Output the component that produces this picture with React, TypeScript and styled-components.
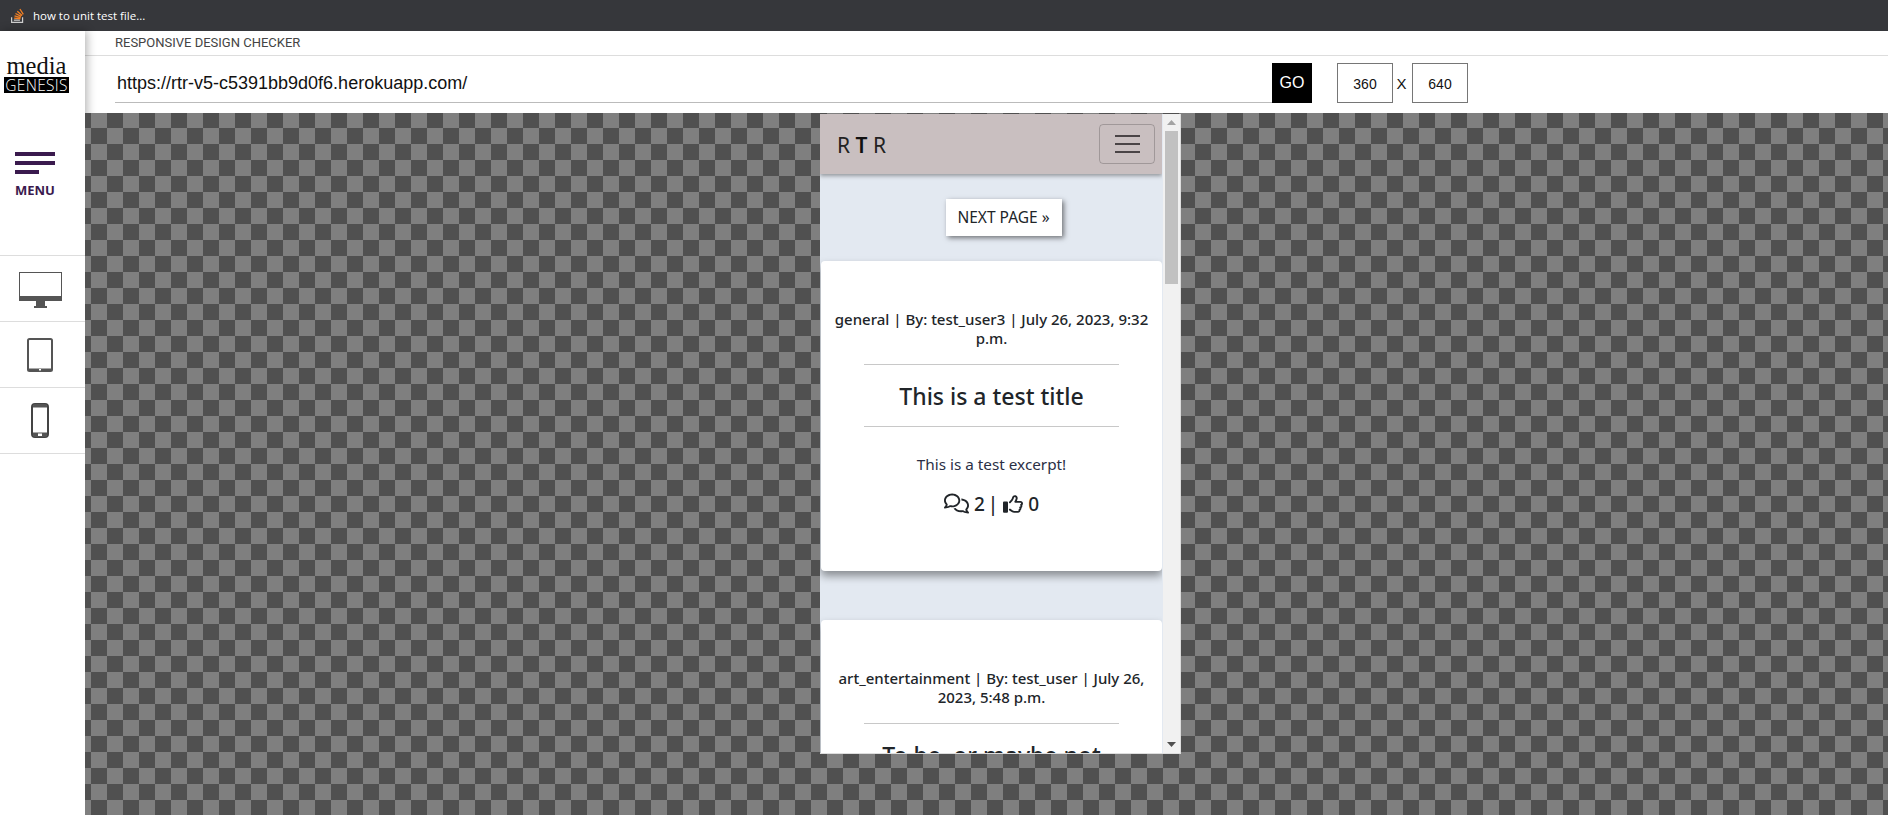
import React from "react";
import styled, { createGlobalStyle } from "styled-components";
import { FaRegComments, FaRegThumbsUp } from "react-icons/fa6";

const GlobalStyle = createGlobalStyle`
  html, body {
    margin: 0;
    height: 100%;
    overflow: hidden;
    background: #fff;
    font-family: "Liberation Sans", Arial, sans-serif;
  }
  * { box-sizing: border-box; }
`;

const Page = styled.div`
  display: grid;
  grid-template-columns: 85px 1fr;
  grid-template-rows: 31px 82px 1fr;
  height: 815px;
  width: 1888px;
`;

const TabBar = styled.div`
  grid-column: 1 / -1;
  display: flex;
  align-items: center;
  gap: 9px;
  padding: 0 0 1px 11px;
  background: #36373b;
  color: #fff;
  font: 400 11.5px "Open Sans", sans-serif;
`;

const Sidebar = styled.aside`
  grid-row: 2 / 4;
  position: relative;
  z-index: 2;
  background: #fff;
  box-shadow: 2px 0 9px rgba(0, 0, 0, 0.3);
  padding-top: 26px;
`;

const Logo = styled.div`
  display: flex;
  flex-direction: column;
  align-items: center;
  gap: 3px;
  width: 65px;
  margin-left: 4px;
`;

const LogoTop = styled.span`
  font: 400 24.5px/17px "Liberation Serif", serif;
  color: #111;
  height: 17px;
`;

const LogoBottom = styled.span`
  width: 100%;
  height: 16px;
  background: #000;
  color: #fff;
  font: 300 15.5px/16px "Open Sans", sans-serif;
  letter-spacing: 0.3px;
  text-align: center;
`;

const MenuBlock = styled.div`
  display: flex;
  flex-direction: column;
  padding: 59px 0 0 15px;
  height: 162px;
`;

const Bar = styled.span<{ $w: number }>`
  display: block;
  width: ${({ $w }) => $w}px;
  height: 3.5px;
  margin-bottom: 5.5px;
  background: #3a1a4e;
`;

const MenuLabel = styled.span`
  margin-top: 3px;
  font: 700 13px/16px "Open Sans", sans-serif;
  color: #3a1a4e;
`;

const DeviceList = styled.div`
  border-top: 1px solid #ddd;
`;

const DeviceItem = styled.div`
  display: flex;
  align-items: center;
  justify-content: center;
  height: 66px;
  padding-right: 5px;
  border-bottom: 1px solid #ddd;
`;

const Header = styled.header`
  position: relative;
  z-index: 1;
  background: #fff;
`;

const TitleRow = styled.div`
  height: 25px;
  padding: 4px 0 0 30px;
  border-bottom: 1px solid #ddd;
  font: 400 13px/16px Roboto, sans-serif;
  color: #444;
`;

const UrlRow = styled.div`
  display: flex;
  align-items: flex-start;
  padding: 7px 0 0 30px;
`;

const UrlInput = styled.input`
  width: 1157px;
  height: 40px;
  padding: 2px 2px 0;
  border: 0;
  border-bottom: 1px solid #bbb;
  outline: none;
  font: 400 18px "Liberation Sans", Arial, sans-serif;
  color: #111;
`;

const GoButton = styled.button`
  width: 40px;
  height: 40px;
  padding: 0;
  border: 0;
  background: #000;
  color: #fff;
  font: 400 16px "Liberation Sans", Arial, sans-serif;
`;

const SizeGroup = styled.div`
  display: flex;
  align-items: center;
  margin-left: 25px;
`;

const SizeInput = styled.input`
  width: 56px;
  height: 40px;
  padding: 2px 0 0;
  border: 1px solid #767676;
  outline: none;
  text-align: center;
  font: 400 14px "Liberation Sans", Arial, sans-serif;
  color: #111;
`;

const SizeX = styled.span`
  width: 19px;
  padding-right: 2px;
  text-align: center;
  font-size: 15px;
  color: #111;
`;

const Canvas = styled.main`
  position: relative;
  z-index: 3;
  overflow: hidden;
  padding: 1px 0 0 735px;
  background: repeating-conic-gradient(#505050 0 25%, #7f7f7f 0 50%) 6px -1px / 32px 32px;
`;

const Frame = styled.div`
  display: flex;
  width: 361px;
  height: 640px;
  overflow: hidden;
  background: #e3e9f1;
  border-right: 1px solid #ddd;
  border-bottom: 1px solid #ddd;
`;

const Viewport = styled.div`
  width: 343px;
  height: 100%;
  overflow: hidden;
  font-family: "Noto Sans", "Open Sans", sans-serif;
  color: #212529;
`;

const Navbar = styled.nav`
  position: relative;
  display: flex;
  align-items: center;
  justify-content: space-between;
  height: 60px;
  padding: 0 7px 0 17px;
  background: #c9bfc0;
  box-shadow: 0 2px 4px rgba(0, 0, 0, 0.35);
`;

const Brand = styled.span`
  padding-top: 2px;
  font-size: 21px;
  color: #222;
`;

const BrandMark = styled.b`
  font-weight: 600;
  color: #111;
`;

const Toggler = styled.button`
  display: flex;
  flex-direction: column;
  justify-content: center;
  gap: 6px;
  align-items: center;
  width: 56px;
  height: 40px;
  padding: 0;
  background: transparent;
  border: 1px solid rgba(0, 0, 0, 0.2);
  border-radius: 4px;
`;

const TogglerLine = styled.span`
  display: block;
  width: 25px;
  height: 2px;
  background: #4a4446;
`;

const Pager = styled.div`
  display: flex;
  justify-content: center;
  padding: 25px 0 0 25px;
  margin-bottom: 25px;
`;

const NextButton = styled.a`
  display: block;
  width: 116px;
  height: 37px;
  background: #fff;
  text-align: center;
  font-size: 15.5px;
  line-height: 37px;
  box-shadow: 2px 2px 5px rgba(0, 0, 0, 0.5);
`;

const Card = styled.article`
  width: 341px;
  margin: 0 0 49px 1px;
  padding: 49px 0 55px;
  background: #fff;
  border-radius: 4px;
  box-shadow: 0 5px 9px rgba(0, 0, 0, 0.4);
  text-align: center;
`;

const Meta = styled.div`
  padding: 0 8px;
  font-size: 15px;
  font-weight: 500;
  line-height: 19px;
`;

const Rule = styled.hr`
  width: 255px;
  margin: 16px auto;
  border: 0;
  border-top: 1px solid #c8c8c8;
`;

const Title = styled.h2`
  margin: -1px 0;
  font-size: 23px;
  font-weight: 500;
  line-height: 33px;
  padding-top: 0;
  height: 31px;
`;

const Excerpt = styled.p`
  margin: 25px 0 15px;
  font-size: 15.3px;
  font-weight: 400;
  line-height: 24px;
  color: #2b2f45;
`;

const Stats = styled.div`
  display: flex;
  justify-content: center;
  align-items: center;
  gap: 5px;
  font-size: 19px;
  font-weight: 500;
  line-height: 24px;
  word-spacing: -2px;
`;

const Scrollbar = styled.div`
  display: flex;
  flex-direction: column;
  width: 17px;
  margin-left: 1px;
  background: #f1f1f1;
`;

const ArrowCell = styled.div`
  display: flex;
  align-items: center;
  justify-content: center;
  height: 17px;
`;

const Thumb = styled.div`
  height: 153px;
  margin: 0 2px;
  background: #c1c1c1;
`;

const Spacer = styled.div`
  flex: 1;
`;

const StackIcon = () => (
  <svg width="13" height="15" viewBox="0 0 32 37">
    <path d="M1.5 23v12.5h27V23" fill="none" stroke="#cfcfcf" strokeWidth="3" />
    <path d="M7 30h15" stroke="#cfcfcf" strokeWidth="3" />
    <path
      d="M7.7 25l15.5 1.5M8.6 19.5l15.2 4.2M11 13.5l14 7.3M15.5 8l11.8 10.3M22 2.5l8.3 13"
      fill="none"
      stroke="#f48024"
      strokeWidth="3.2"
    />
  </svg>
);

const MonitorIcon = () => (
  <svg width="43" height="38" viewBox="0 -2 43 38">
    <rect x="0.5" y="0.5" width="42" height="28" fill="#fff" stroke="#555" />
    <rect x="0.5" y="24" width="42" height="5" fill="#555" />
    <path d="M17 29h9v5h-9zM15 34h13v2H15z" fill="#555" />
  </svg>
);

const TabletIcon = () => (
  <svg width="26" height="34" viewBox="0 0 26 34">
    <rect x="1" y="1" width="24" height="32" rx="1.5" fill="#fff" stroke="#555" strokeWidth="2" />
    <rect x="2" y="30.5" width="22" height="2" fill="#555" />
    <rect x="12" y="31" width="2" height="1.5" fill="#fff" />
  </svg>
);

const PhoneIcon = () => (
  <svg width="18" height="35" viewBox="0 0 18 35">
    <rect x="1" y="1" width="16" height="33" rx="3" fill="#fff" stroke="#444" strokeWidth="2" />
    <path d="M2 4.5V3a2 2 0 0 1 2-2h10a2 2 0 0 1 2 2v1.5zM2 29.5h14V32a2 2 0 0 1-2 2H4a2 2 0 0 1-2-2z" fill="#555" />
    <rect x="7" y="30.5" width="4" height="2.5" fill="#fff" />
  </svg>
);

const ArrowIcon = ({ down }: { down?: boolean }) => (
  <svg width="9" height="5" viewBox="0 0 9 5">
    <path d={down ? "M0 0h9L4.5 5z" : "M0 5h9L4.5 0z"} fill={down ? "#505050" : "#a3a3a3"} />
  </svg>
);

const App: React.FC = () => {
  return (
    <Page>
      <GlobalStyle />
      <TabBar>
        <StackIcon />
        <span>how to unit test file...</span>
      </TabBar>
      <Sidebar>
        <Logo>
          <LogoTop>media</LogoTop>
          <LogoBottom>GENESIS</LogoBottom>
        </Logo>
        <MenuBlock>
          <Bar $w={40} />
          <Bar $w={40} />
          <Bar $w={24} />
          <MenuLabel>MENU</MenuLabel>
        </MenuBlock>
        <DeviceList>
          <DeviceItem><MonitorIcon /></DeviceItem>
          <DeviceItem><TabletIcon /></DeviceItem>
          <DeviceItem><PhoneIcon /></DeviceItem>
        </DeviceList>
      </Sidebar>
      <Header>
        <TitleRow>RESPONSIVE DESIGN CHECKER</TitleRow>
        <UrlRow>
          <UrlInput readOnly value="https://rtr-v5-c5391bb9d0f6.herokuapp.com/" />
          <GoButton>GO</GoButton>
          <SizeGroup>
            <SizeInput readOnly value="360" />
            <SizeX>X</SizeX>
            <SizeInput readOnly value="640" />
          </SizeGroup>
        </UrlRow>
      </Header>
      <Canvas>
        <Frame>
          <Viewport>
            <Navbar>
              <Brand>R <BrandMark>T</BrandMark> R</Brand>
              <Toggler>
                <TogglerLine />
                <TogglerLine />
                <TogglerLine />
              </Toggler>
            </Navbar>
            <Pager>
              <NextButton>NEXT PAGE »</NextButton>
            </Pager>
            <Card>
              <Meta>general | By: test_user3 | July 26, 2023, 9:32 p.m.</Meta>
              <Rule />
              <Title>This is a test title</Title>
              <Rule />
              <Excerpt>This is a test excerpt!</Excerpt>
              <Stats>
                <FaRegComments size={25} />
                <span>2 |</span>
                <FaRegThumbsUp size={20} />
                <span>0</span>
              </Stats>
            </Card>
            <Card>
              <Meta>art_entertainment | By: test_user | July 26, 2023, 5:48 p.m.</Meta>
              <Rule />
              <Title>To be, or maybe not</Title>
            </Card>
          </Viewport>
          <Scrollbar>
            <ArrowCell><ArrowIcon /></ArrowCell>
            <Thumb />
            <Spacer />
            <ArrowCell><ArrowIcon down /></ArrowCell>
          </Scrollbar>
        </Frame>
      </Canvas>
    </Page>
  );
};

export default App;
